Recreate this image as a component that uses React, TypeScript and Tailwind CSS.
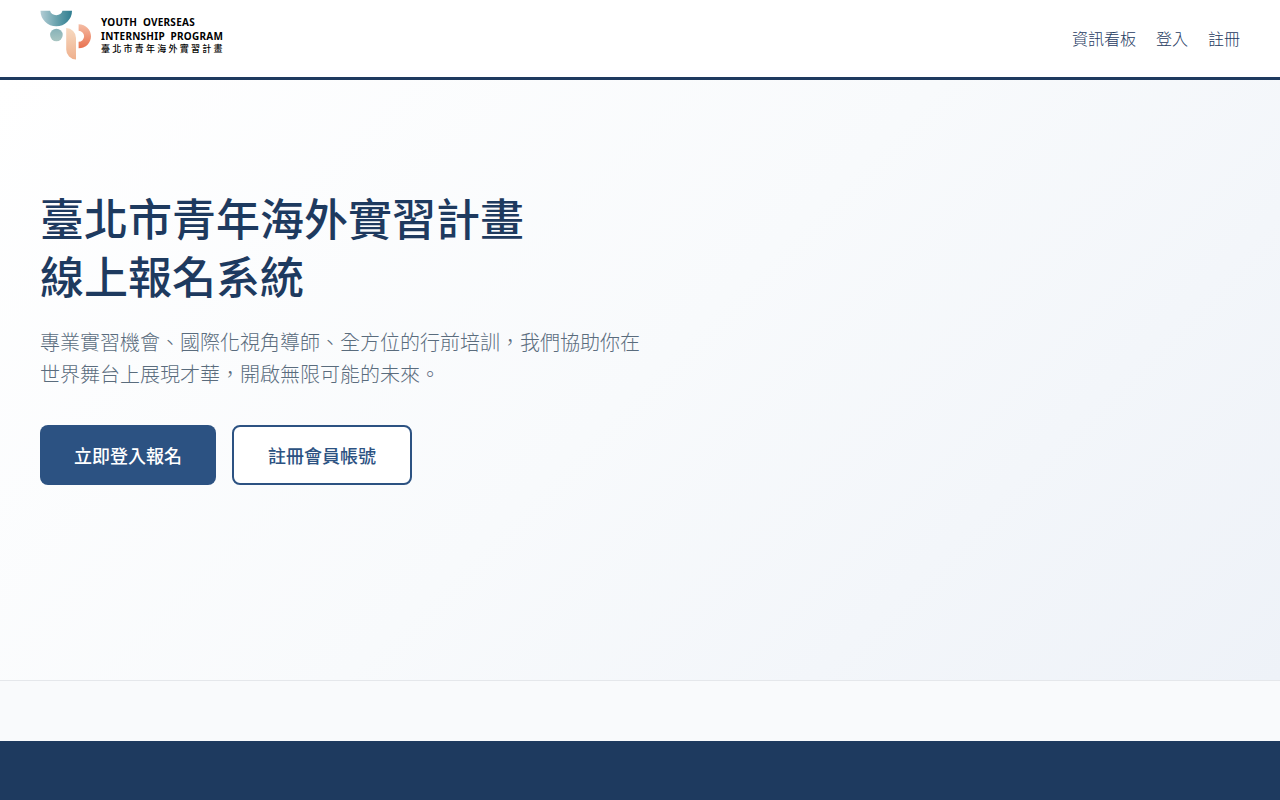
import React from 'react';

const navLinks = [
  { label: '資訊看板', href: '#board' },
  { label: '登入', href: '#login' },
  { label: '註冊', href: '#register' },
];

const LogoMark: React.FC = () => (
  <svg width="52" height="50" viewBox="0 0 52 50" aria-hidden="true" className="shrink-0">
    <defs>
      <linearGradient id="bowl" x1="0" y1="0" x2="1" y2="0">
        <stop offset="0" stopColor="#b3cdd5" />
        <stop offset="0.5" stopColor="#6ba3ae" />
        <stop offset="1" stopColor="#2e7d90" />
      </linearGradient>
      <linearGradient id="dot" x1="0" y1="0" x2="0" y2="1">
        <stop offset="0" stopColor="#87b2b8" />
        <stop offset="1" stopColor="#a9c6c2" />
      </linearGradient>
      <linearGradient id="stem" x1="0" y1="0" x2="0" y2="1">
        <stop offset="0" stopColor="#f6d9c0" />
        <stop offset="1" stopColor="#efb08d" />
      </linearGradient>
      <linearGradient id="arc" x1="0" y1="0" x2="0" y2="1">
        <stop offset="0" stopColor="#f4bda5" />
        <stop offset="1" stopColor="#e9714f" />
      </linearGradient>
    </defs>
    <path d="M0.500 0.800H10A6.500 6 0 0 0 22.500 0.800H32A15.700 15.400 0 0 1 0.500 0.800Z" fill="url(#bowl)" />
    <circle cx="16.400" cy="25" r="6.300" fill="url(#dot)" />
    <path d="M26.200 18A10 10 0 0 1 36 28V49.500A10 10 0 0 1 26.200 39.500Z" fill="url(#stem)" />
    <path d="M38.600 14.200A12.300 12.050 0 0 1 38.600 38.300V31.800A5.500 5.500 0 0 0 38.600 20.800Z M38.600 14.200C46 14.200 51 20 51 26.200C51 32.500 46 38.300 38.600 38.300V31.800A5.500 5.500 0 0 0 38.600 20.800Z" fill="url(#arc)" />
  </svg>
);

const Logo: React.FC = () => (
  <a href="#home" className="flex items-start gap-[9px] text-black">
    <LogoMark />
    <span className="flex flex-col pt-[5px] whitespace-nowrap font-['Noto_Sans','Noto_Sans_CJK_TC',sans-serif]">
      <span className="text-[10px] leading-[14px] font-bold tracking-wide">YOUTH&nbsp; OVERSEAS</span>
      <span className="text-[10px] leading-[14px] font-bold tracking-wide">INTERNSHIP&nbsp; PROGRAM</span>
      <span className="text-[9px] leading-[11px] font-medium tracking-[0.25em] font-['Noto_Sans_CJK_TC',sans-serif]">臺北市青年海外實習計畫</span>
    </span>
  </a>
);

const App: React.FC = () => {
  return (
    <div className="min-h-screen flex flex-col bg-[#f9fafc] text-[#1e3a5f] font-['Noto_Sans_CJK_TC',sans-serif]">
      {/* Header */}
      <header className="h-20 flex items-start justify-between px-10 bg-white border-b-3 border-[#1e3a5f]">
        <div className="pt-2.5">
          <Logo />
        </div>
        <nav className="self-center flex gap-5 pb-0.5 text-base font-light">
          {navLinks.map(link => (
            <a key={link.href} href={link.href} className="hover:underline">{link.label}</a>
          ))}
        </nav>
      </header>

      <main>
        {/* Hero */}
        <section className="min-h-[600px] px-10 pt-27 pb-20 bg-[linear-gradient(135deg,#ffffff_0%,#f8fafc_50%,#eef2f8_100%)]">
          <div className="max-w-[600px]">
            <h1 className="text-[44px] leading-[58px] font-medium">
              臺北市青年海外實習計畫<br />線上報名系統
            </h1>
            <p className="mt-[22px] text-xl leading-8 font-light text-[#5a6c7d]">
              專業實習機會、國際化視角導師、全方位的行前培訓，我們協助你在世界舞台上展現才華，開啟無限可能的未來。
            </p>
            <div className="mt-[35px] flex gap-4">
              <button type="button" className="h-15 px-[34px] rounded-lg bg-[#2c5282] text-white text-lg font-medium">
                立即登入報名
              </button>
              <button type="button" className="h-15 px-[34px] rounded-lg border-2 border-[#2c5282] bg-white text-[#2c5282] text-lg font-medium">
                註冊會員帳號
              </button>
            </div>
          </div>
        </section>

        <section className="h-[61px] border-t border-[#e5e7eb] bg-[#f9fafc]" />
      </main>

      <footer className="grow min-h-14 bg-[#1e3a5f]" />
    </div>
  );
};

export default App;
